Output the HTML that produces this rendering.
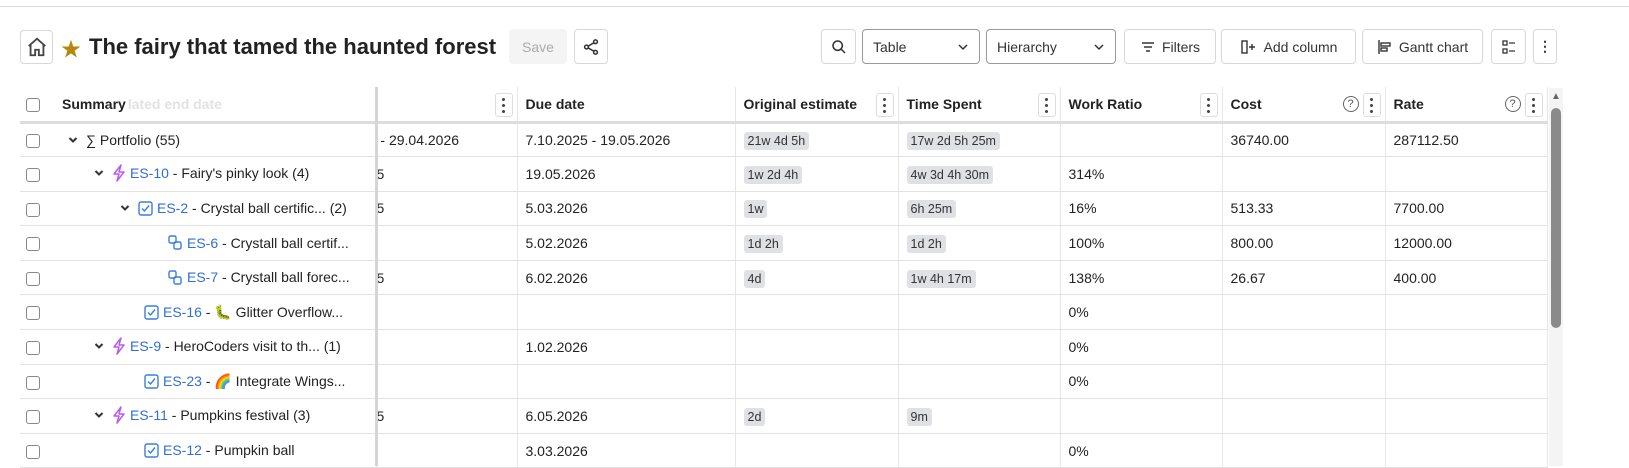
<!DOCTYPE html>
<html><head><meta charset="utf-8"><style>
*{box-sizing:border-box;margin:0;padding:0}
body{width:1629px;height:466px;overflow:hidden;background:#fff;font-family:"Liberation Sans","Noto Sans CJK JP",sans-serif;color:#222;font-size:14px;position:relative}
.topline{position:absolute;left:0;top:6px;width:1629px;height:1px;background:#ddd}
.btn{position:absolute;top:29px;height:35px;border:1px solid #d8d8d8;border-radius:4px;background:#fff;display:flex;align-items:center;justify-content:center;font-size:14px;color:#333;gap:6px}
.sel{border-color:#999;justify-content:space-between;padding:0 10px}
h1{position:absolute;left:89px;top:34px;font-size:22px;font-weight:bold;color:#222;letter-spacing:0px}
table{position:absolute;left:20px;top:87px;border-collapse:collapse;table-layout:fixed}
td,th{height:34.6px;border-bottom:1px solid #e2e2e2;border-right:1px solid #e6e6e6;padding:0 8px;white-space:nowrap;overflow:hidden;text-align:left;font-size:14px}
th{font-weight:bold;height:35px;border-bottom:3px solid #ddd;position:relative}
td.cb,th.cb{padding:0 0 0 6px;border-right:none}
.box{display:inline-block;width:14px;height:14px;border:1px solid #888;border-radius:3px;vertical-align:middle}
.pill{background:#e0e1e5;border-radius:3px;padding:2px 4px;font-size:12.5px;color:#333}
.dots{position:absolute;right:4px;top:6px;width:18px;height:24px;border:1px solid #ddd;border-radius:3px;display:flex;flex-direction:column;align-items:center;justify-content:center;gap:3px}
.dots i{width:3px;height:3px;background:#444;border-radius:50%}
.q{position:absolute;right:26px;top:9px;width:16px;height:16px;border:1px solid #666;border-radius:50%;font-size:11px;font-weight:normal;text-align:center;line-height:14px;color:#555}
.lnk{color:#2f6fd6}
svg.i{vertical-align:middle;margin-right:4px;position:relative;top:-1px}
svg.ch{vertical-align:middle;margin-right:8px;position:relative;top:-1px}
.shadow{position:absolute;left:375px;top:87px;width:3px;height:379px;background:#d5d5d5}
.faint{color:#e2e2e2}
</style></head><body>
<div class="topline"></div>
<div class="btn" style="left:20px;width:33px;top:30px;height:34px"><svg width="22" height="22" viewBox="0 0 24 24" fill="none" stroke="#444" stroke-width="2"><path d="M3 11L12 3l9 8M5 9v12h5v-6h4v6h5V9"/></svg></div>
<div style="position:absolute;left:61px;top:33px;color:#b8860b;font-size:20px">★</div>
<h1>The fairy that tamed the haunted forest</h1>
<div class="btn" style="left:509px;width:58px;background:#f4f4f4;border-color:#f4f4f4;color:#aaa">Save</div>
<div class="btn" style="left:574px;width:34px"><svg width="18" height="18" viewBox="0 0 24 24" fill="none" stroke="#333" stroke-width="2"><circle cx="18" cy="5" r="2.5"/><circle cx="6" cy="12" r="2.5"/><circle cx="18" cy="19" r="2.5"/><path d="M8.2 10.8l7.6-4.4M8.2 13.2l7.6 4.4"/></svg></div>
<div class="btn" style="left:821px;width:35px"><svg width="16" height="16" viewBox="0 0 24 24" fill="none" stroke="#333" stroke-width="2.3"><circle cx="10" cy="10" r="7"/><path d="M15 15l6 6"/></svg></div>
<div class="btn sel" style="left:862px;width:118px">Table<svg width="12" height="12" viewBox="0 0 12 12" fill="none" stroke="#333" stroke-width="1.5"><path d="M2 4l4 4 4-4"/></svg></div>
<div class="btn sel" style="left:986px;width:130px">Hierarchy<svg width="12" height="12" viewBox="0 0 12 12" fill="none" stroke="#333" stroke-width="1.5"><path d="M2 4l4 4 4-4"/></svg></div>
<div class="btn" style="left:1124px;width:92px"><svg width="16" height="16" viewBox="0 0 16 16" stroke="#333" stroke-width="1.5"><path d="M2 4h12M4 8h8M6 12h4"/></svg>Filters</div>
<div class="btn" style="left:1221px;width:135px"><svg width="18" height="16" viewBox="0 0 18 16" fill="none" stroke="#333" stroke-width="1.4"><rect x="2" y="2" width="5" height="12"/><path d="M9 8h6M12 5v6"/></svg>Add column</div>
<div class="btn" style="left:1362px;width:121px"><svg width="16" height="16" viewBox="0 0 16 16" fill="none" stroke="#333" stroke-width="1.4"><path d="M2 1v14"/><rect x="4" y="4" width="9" height="3"/><rect x="4" y="9" width="6" height="3"/></svg>Gantt chart</div>
<div class="btn" style="left:1491px;width:35px"><svg width="16" height="16" viewBox="0 0 16 16" fill="none" stroke="#333" stroke-width="1.3"><rect x="2" y="2" width="4" height="4"/><rect x="2" y="10" width="4" height="4"/><path d="M8 4h6M8 12h6"/></svg></div>
<div class="btn" style="left:1533px;width:24px;font-weight:bold">&#8942;</div>

<table>
<colgroup><col style="width:26px"><col style="width:330px"><col style="width:141px"><col style="width:218px"><col style="width:163px"><col style="width:162px"><col style="width:162px"><col style="width:163px"><col style="width:162px"></colgroup>
<tr><th class="cb"><span class="box"></span></th><th style="padding-left:16px">Summary<span class="faint" style="margin-left:2px">lated end date</span></th><th><span class="dots"><i></i><i></i><i></i></span></th><th>Due date</th><th style="padding-right:30px">Original estimate<span class="dots"><i></i><i></i><i></i></span></th><th>Time Spent<span class="dots"><i></i><i></i><i></i></span></th><th>Work Ratio<span class="dots"><i></i><i></i><i></i></span></th><th>Cost<span class="q">?</span><span class="dots"><i></i><i></i><i></i></span></th><th>Rate<span class="q">?</span><span class="dots"><i></i><i></i><i></i></span></th></tr>
<tr><td class="cb"><span class="box"></span></td><td style="padding-left:22px"><svg class="ch" width="10" height="8" viewBox="0 0 10 8" fill="none" stroke="#333" stroke-width="2"><path d="M1.5 2l3.5 3.5L8.5 2"/></svg>∑ Portfolio (55)</td><td style="padding-left:0">&nbsp;- 29.04.2026</td><td>7.10.2025 - 19.05.2026</td><td><span class="pill">21w 4d 5h</span></td><td><span class="pill">17w 2d 5h 25m</span></td><td></td><td>36740.00</td><td>287112.50</td></tr>
<tr><td class="cb"><span class="box"></span></td><td style="padding-left:48px"><svg class="ch" width="10" height="8" viewBox="0 0 10 8" fill="none" stroke="#333" stroke-width="2"><path d="M1.5 2l3.5 3.5L8.5 2"/></svg><svg class="i" width="14" height="18" viewBox="0 0 14 18" fill="none" stroke="#b65cf0" stroke-width="1.5" stroke-linejoin="round"><path d="M9 1L2 10h5l-2 7 7-9H7z"/></svg><span class="lnk">ES-10</span> - Fairy's pinky look (4)</td><td style="padding-left:0">5</td><td>19.05.2026</td><td><span class="pill">1w 2d 4h</span></td><td><span class="pill">4w 3d 4h 30m</span></td><td>314%</td><td></td><td></td></tr>
<tr><td class="cb"><span class="box"></span></td><td style="padding-left:74px"><svg class="ch" width="10" height="8" viewBox="0 0 10 8" fill="none" stroke="#333" stroke-width="2"><path d="M1.5 2l3.5 3.5L8.5 2"/></svg><svg class="i" width="15" height="15" viewBox="0 0 15 15" fill="none" stroke="#3b7de0" stroke-width="1.4"><rect x="1" y="1" width="13" height="13" rx="2"/><path d="M4 7.5l2.5 2.5L11 4.5"/></svg><span class="lnk">ES-2</span> - Crystal ball certific... (2)</td><td style="padding-left:0">5</td><td>5.03.2026</td><td><span class="pill">1w</span></td><td><span class="pill">6h 25m</span></td><td>16%</td><td>513.33</td><td>7700.00</td></tr>
<tr><td class="cb"><span class="box"></span></td><td style="padding-left:122px"><svg class="i" width="15" height="15" viewBox="0 0 15 15" fill="none" stroke="#3b7de0" stroke-width="1.4"><rect x="1" y="1" width="7" height="7" rx="1.5"/><rect x="6" y="7" width="7" height="7" rx="1.5"/></svg><span class="lnk">ES-6</span> - Crystall ball certif...</td><td></td><td>5.02.2026</td><td><span class="pill">1d 2h</span></td><td><span class="pill">1d 2h</span></td><td>100%</td><td>800.00</td><td>12000.00</td></tr>
<tr><td class="cb"><span class="box"></span></td><td style="padding-left:122px"><svg class="i" width="15" height="15" viewBox="0 0 15 15" fill="none" stroke="#3b7de0" stroke-width="1.4"><rect x="1" y="1" width="7" height="7" rx="1.5"/><rect x="6" y="7" width="7" height="7" rx="1.5"/></svg><span class="lnk">ES-7</span> - Crystall ball forec...</td><td style="padding-left:0">5</td><td>6.02.2026</td><td><span class="pill">4d</span></td><td><span class="pill">1w 4h 17m</span></td><td>138%</td><td>26.67</td><td>400.00</td></tr>
<tr><td class="cb"><span class="box"></span></td><td style="padding-left:98px"><svg class="i" width="15" height="15" viewBox="0 0 15 15" fill="none" stroke="#3b7de0" stroke-width="1.4"><rect x="1" y="1" width="13" height="13" rx="2"/><path d="M4 7.5l2.5 2.5L11 4.5"/></svg><span class="lnk">ES-16</span> - 🐛 Glitter Overflow...</td><td></td><td></td><td></td><td></td><td>0%</td><td></td><td></td></tr>
<tr><td class="cb"><span class="box"></span></td><td style="padding-left:48px"><svg class="ch" width="10" height="8" viewBox="0 0 10 8" fill="none" stroke="#333" stroke-width="2"><path d="M1.5 2l3.5 3.5L8.5 2"/></svg><svg class="i" width="14" height="18" viewBox="0 0 14 18" fill="none" stroke="#b65cf0" stroke-width="1.5" stroke-linejoin="round"><path d="M9 1L2 10h5l-2 7 7-9H7z"/></svg><span class="lnk">ES-9</span> - HeroCoders visit to th... (1)</td><td></td><td>1.02.2026</td><td></td><td></td><td>0%</td><td></td><td></td></tr>
<tr><td class="cb"><span class="box"></span></td><td style="padding-left:98px"><svg class="i" width="15" height="15" viewBox="0 0 15 15" fill="none" stroke="#3b7de0" stroke-width="1.4"><rect x="1" y="1" width="13" height="13" rx="2"/><path d="M4 7.5l2.5 2.5L11 4.5"/></svg><span class="lnk">ES-23</span> - 🌈 Integrate Wings...</td><td></td><td></td><td></td><td></td><td>0%</td><td></td><td></td></tr>
<tr><td class="cb"><span class="box"></span></td><td style="padding-left:48px"><svg class="ch" width="10" height="8" viewBox="0 0 10 8" fill="none" stroke="#333" stroke-width="2"><path d="M1.5 2l3.5 3.5L8.5 2"/></svg><svg class="i" width="14" height="18" viewBox="0 0 14 18" fill="none" stroke="#b65cf0" stroke-width="1.5" stroke-linejoin="round"><path d="M9 1L2 10h5l-2 7 7-9H7z"/></svg><span class="lnk">ES-11</span> - Pumpkins festival (3)</td><td style="padding-left:0">5</td><td>6.05.2026</td><td><span class="pill">2d</span></td><td><span class="pill">9m</span></td><td></td><td></td><td></td></tr>
<tr><td class="cb"><span class="box"></span></td><td style="padding-left:98px"><svg class="i" width="15" height="15" viewBox="0 0 15 15" fill="none" stroke="#3b7de0" stroke-width="1.4"><rect x="1" y="1" width="13" height="13" rx="2"/><path d="M4 7.5l2.5 2.5L11 4.5"/></svg><span class="lnk">ES-12</span> - Pumpkin ball</td><td></td><td>3.03.2026</td><td></td><td></td><td>0%</td><td></td><td></td></tr>
</table>
<div class="shadow"></div>
<div style="position:absolute;left:1549px;top:88px;width:14px;height:378px;background:#f4f4f4"></div>
<div style="position:absolute;left:1551px;top:108px;width:10px;height:220px;background:#8a8a8a;border-radius:5px"></div>
<div style="position:absolute;left:1551px;top:91px;font-size:10px;color:#666">▲</div>
</body></html>
